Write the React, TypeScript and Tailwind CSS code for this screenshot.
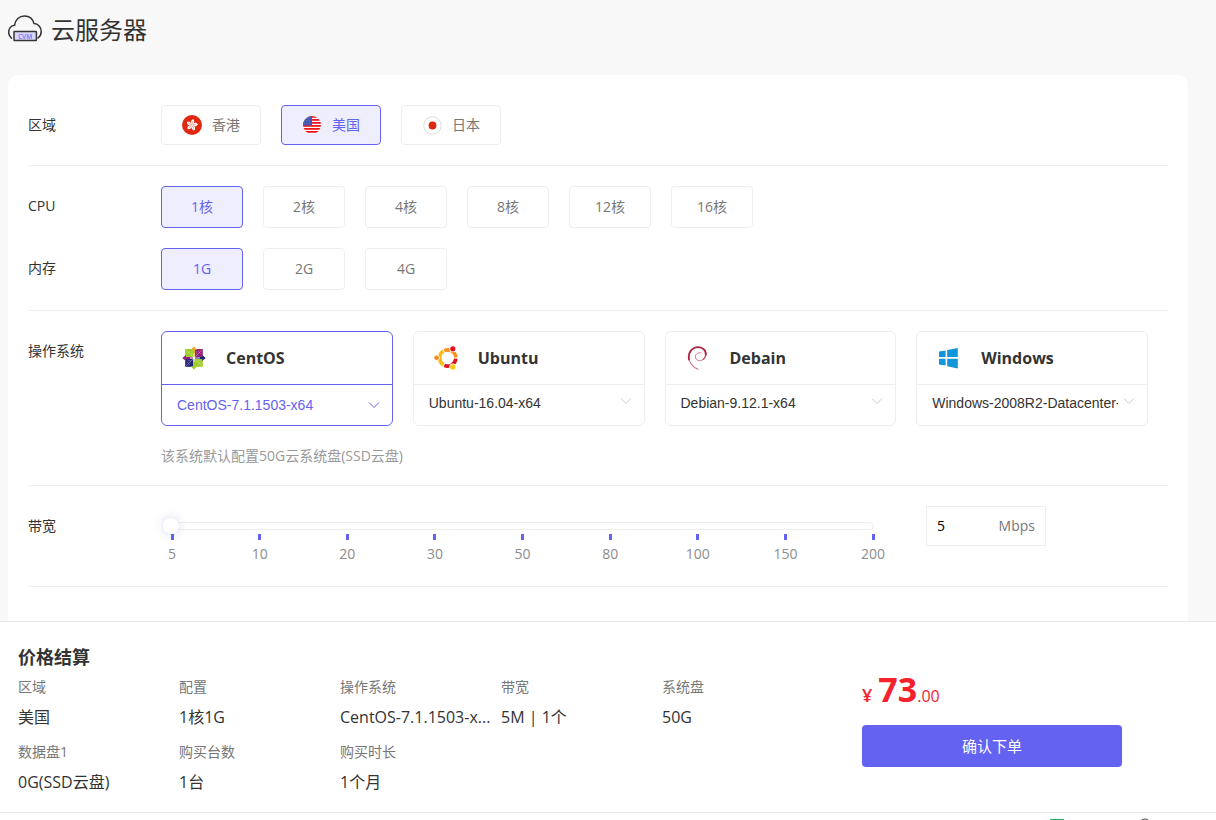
import { useState } from 'react'
import type { ReactNode } from 'react'

const REGIONS = [
  { id: 'hk', name: '香港', icon: <HongKongFlag /> },
  { id: 'us', name: '美国', icon: <UsaFlag /> },
  { id: 'jp', name: '日本', icon: <JapanFlag /> },
]

const CPUS = ['1核', '2核', '4核', '8核', '12核', '16核']
const MEMORY = ['1G', '2G', '4G']
const BANDWIDTH = [5, 10, 20, 30, 50, 80, 100, 150, 200]

const SYSTEMS = [
  { name: 'CentOS', icon: <CentosLogo />, versions: ['CentOS-7.1.1503-x64'] },
  { name: 'Ubuntu', icon: <UbuntuLogo />, versions: ['Ubuntu-16.04-x64'] },
  { name: 'Debain', icon: <DebianLogo />, versions: ['Debian-9.12.1-x64'] },
  { name: 'Windows', icon: <WindowsLogo />, versions: ['Windows-2008R2-Datacenter-x64-cn'] },
]

const shorten = (text: string) => (text.length > 18 ? `${text.slice(0, 17)}...` : text)

function CloudIcon() {
  return (
    <svg className="w-9 h-8" viewBox="0.8 1 36 32" fill="none" aria-hidden="true">
      <path
        d="M4.2 25.2C2.6 24 1.5 22 1.5 19.3C1.5 15.6 3.8 12.6 7.4 12.2C8 6.6 12.2 2.9 17.2 2.9C22 2.9 25.6 5.8 26.8 10.6C31 10.8 34 14.2 34 18.4C34 21.4 32.5 23.6 30.8 25"
        stroke="#333"
        strokeWidth="1.5"
        strokeLinecap="round"
      />
      <rect x="6.8" y="18.4" width="22.4" height="9.2" rx="0.6" fill="#d9d8ff" stroke="#333" strokeWidth="1.5" />
      <text x="18" y="25.5" textAnchor="middle" fontSize="6.5" fontWeight="700" fontFamily="Open Sans, sans-serif" fill="#8482f5">
        CVM
      </text>
    </svg>
  )
}

function HongKongFlag() {
  return (
    <svg className="w-5 h-5" viewBox="0 0 20 20" aria-hidden="true">
      <circle cx="10" cy="10" r="10" fill="#de2910" />
      {[15, 87, 159, 231, 303].map((angle) => (
        <g key={angle} transform={`rotate(${angle} 10 10)`}>
          <path d="M10 10C7.6 8.8 7.2 5.4 9.9 4C10.5 5 11.6 5.5 11.4 6.9C11.2 8.1 10 8.3 10 10Z" fill="#fff" />
          <path d="M9.8 8.8C9.3 7.9 9.4 6.8 10 6" fill="none" stroke="#de2910" strokeWidth="0.4" />
        </g>
      ))}
    </svg>
  )
}

function UsaFlag() {
  return (
    <svg className="w-5 h-5" viewBox="0 0 20 20" aria-hidden="true">
      <clipPath id="usa">
        <circle cx="10" cy="10" r="9" />
      </clipPath>
      <g clipPath="url(#usa)">
        <rect width="20" height="20" fill="#fff" />
        {[1, 4, 7, 10, 13, 16].map((y) => (
          <rect key={y} y={y} width="20" height="1.8" fill="#f0141e" />
        ))}
        <rect width="10" height="10.4" fill="#4558b0" />
        {[3, 5.5, 8].map((y) =>
          [2.5, 5, 7.5].map((x) => <circle key={`${x}-${y}`} cx={x} cy={y} r="0.4" fill="#8f9cd6" />)
        )}
      </g>
    </svg>
  )
}

function JapanFlag() {
  return (
    <svg className="w-5 h-5" viewBox="0 0 20 20" aria-hidden="true">
      <circle cx="10.5" cy="10.5" r="8.7" fill="#fff" stroke="#dcdcdc" />
      <circle cx="10.5" cy="10.5" r="3.9" fill="#de2910" />
    </svg>
  )
}

function CentosLogo() {
  return (
    <svg className="w-6 h-6" viewBox="0 0 24 24" aria-hidden="true">
      <rect x="3.2" y="3" width="8.4" height="8.4" fill="#9ccd2a" />
      <rect x="12.4" y="3" width="8.4" height="8.4" fill="#932279" />
      <rect x="3.2" y="12.4" width="8.4" height="8.4" fill="#262577" />
      <rect x="12.4" y="12.4" width="8.4" height="8.4" fill="#9ccd2a" />
      <path d="M4 4L20 20M20 4L4 20" stroke="#fff" strokeWidth="0.7" strokeOpacity="0.4" />
      <path
        d="M5 8L8 5M9 10L10 5M14 5L15 9M16 5L19 8M5 16L8 19M5 14L9 15M16 19L19 16M15 15L19 14"
        stroke="#fff"
        strokeWidth="0.5"
        strokeOpacity="0.4"
      />
      <path d="M12 0.3L15 4H13V11H11V4H9Z" fill="#efa724" />
      <path d="M23.7 12L20.2 15V13H13V11H20.2V9Z" fill="#262577" />
      <path d="M12 23.7L9 20.2H11V13H13V20.2H15Z" fill="#9ccd2a" />
      <path d="M0.3 12L3.8 9V11H11V13H3.8V15Z" fill="#932279" />
      <path d="M12 7V16M8 12H18" stroke="#fff" strokeWidth="0.9" />
    </svg>
  )
}

function UbuntuLogo() {
  return (
    <svg className="w-6 h-6" viewBox="0 0 24 24" fill="none" aria-hidden="true">
      <path d="M9.3 5.1A8.2 8.2 0 0 0 9.3 18.7" stroke="#fdb813" strokeWidth="3.6" />
      <path d="M10.3 4.6A8.2 8.2 0 0 1 21.8 11.4" stroke="#f78f1e" strokeWidth="3.6" />
      <path d="M21.8 12.6A8.2 8.2 0 0 1 10.3 19.4" stroke="#e3101d" strokeWidth="3.6" />
      <circle cx="2.6" cy="11.8" r="3" fill="#fff" />
      <circle cx="18.8" cy="2.8" r="3.5" fill="#fff" />
      <circle cx="18.8" cy="20.9" r="3.5" fill="#fff" />
      <circle cx="2.6" cy="11.8" r="2.4" fill="#f78f1e" />
      <circle cx="18.8" cy="2.8" r="2.6" fill="#e3101d" />
      <circle cx="18.8" cy="20.9" r="2.6" fill="#fdc70c" />
    </svg>
  )
}

function DebianLogo() {
  return (
    <svg className="w-6 h-6" viewBox="0 0 24 24" fill="none" stroke="#b0233f" strokeLinecap="round" aria-hidden="true">
      <path d="M12 23.2C6.4 21 2.4 16 2.7 10.4" strokeWidth="1.1" strokeOpacity="0.6" />
      <path d="M3 13.6C1.6 6.2 6.4 1.1 12.2 1.1C17 1.1 20 4.6 19.8 8.6" strokeWidth="1.8" />
      <path d="M19 4C20.8 7.4 19.6 11.6 17.4 13.2" strokeWidth="1.4" strokeOpacity="0.8" />
      <path d="M17.8 12.8C15.6 15.6 11 15.4 9.6 12C8.6 9 11 6.2 14.8 6.8" strokeWidth="1" strokeOpacity="0.6" />
    </svg>
  )
}

function WindowsLogo() {
  return (
    <svg className="w-6 h-6" viewBox="0 0 24 24" fill="#1296db" aria-hidden="true">
      <path d="M2 5.4L8.6 4.4V11H2ZM10.2 4.1L20.8 1.9V11H10.2ZM2 12.8H8.6V19.4L2 18.4ZM10.2 12.8H20.8V22.4L10.2 20.2Z" />
    </svg>
  )
}

interface RowProps {
  label: string
  children: ReactNode
}

function Row({ label, children }: RowProps) {
  return (
    <div className="flex" role="group" aria-label={label}>
      <div className="w-[133px] shrink-0 text-sm leading-10">{label}</div>
      <div className="flex-1 min-w-0">{children}</div>
    </div>
  )
}

function Section({ children }: { children: ReactNode }) {
  return <section className="flex flex-col gap-5 pb-5 mb-5 border-b border-[#efeefe]">{children}</section>
}

interface OptionProps {
  active: boolean
  onClick: () => void
  className: string
  children: ReactNode
}

function Option({ active, onClick, className, children }: OptionProps) {
  return (
    <button
      type="button"
      aria-pressed={active}
      onClick={onClick}
      className={`flex items-center justify-center gap-2.5 rounded-sm border text-sm cursor-pointer ${
        active ? 'border-[#6462f1] bg-[#efeefd] text-[#6462f1]' : 'border-[#eee] bg-white text-[#777]'
      } ${className}`}
    >
      {children}
    </button>
  )
}

interface SystemCardProps {
  system: (typeof SYSTEMS)[number]
  active: boolean
  onSelect: () => void
}

function SystemCard({ system, active, onSelect }: SystemCardProps) {
  const border = active ? 'border-[#6462f1]' : 'border-[#eee]'

  return (
    <div className={`rounded-md border ${border}`} onClick={onSelect}>
      <div className={`flex items-center gap-5 h-[53px] pl-5 border-b ${border}`}>
        {system.icon}
        <span className="text-base font-bold">{system.name}</span>
      </div>
      <div className={`relative h-10 pl-[15px] pr-[29px] ${active ? 'text-[#6462f1]' : ''}`}>
        <select
          aria-label={system.name}
          className={`block w-full appearance-none bg-transparent font-['Liberation_Sans',sans-serif] text-sm outline-none ${
            active ? 'h-10' : 'h-9'
          }`}
        >
          {system.versions.map((version) => (
            <option key={version}>{version}</option>
          ))}
        </select>
        <svg
          className={`absolute right-3 w-3 h-2 pointer-events-none ${active ? 'top-4' : 'top-3 text-[#ccc]'}`}
          viewBox="0 0 12 8"
          fill="none"
          stroke="currentColor"
          aria-hidden="true"
        >
          <path d="M1 1.5L6 6.5L11 1.5" />
        </svg>
      </div>
    </div>
  )
}

function SummaryItem({ label, value }: { label: string; value: string }) {
  return (
    <div className="h-[65px] min-w-0 pr-1">
      <dt className="text-sm leading-[30px] text-[#777]">{label}</dt>
      <dd className="text-base leading-[30px] whitespace-nowrap">{shorten(value)}</dd>
    </div>
  )
}

export default function App() {
  const [region, setRegion] = useState('us')
  const [cpu, setCpu] = useState('1核')
  const [memory, setMemory] = useState('1G')
  const [system, setSystem] = useState('CentOS')
  const [step, setStep] = useState(0)

  const bandwidth = BANDWIDTH[step]
  const summary = [
    { label: '区域', value: REGIONS.find((r) => r.id === region)!.name },
    { label: '配置', value: `${cpu}${memory}` },
    { label: '操作系统', value: SYSTEMS.find((s) => s.name === system)!.versions[0] },
    { label: '带宽', value: `${bandwidth}M | 1个` },
    { label: '系统盘', value: '50G' },
    { label: '数据盘1', value: '0G(SSD云盘)' },
    { label: '购买台数', value: '1台' },
    { label: '购买时长', value: '1个月' },
  ]

  return (
    <div className="h-screen flex flex-col overflow-hidden bg-[#f8f8f8] text-[#333] font-['Open_Sans','Noto_Sans_CJK_SC',sans-serif]">
      <main className="flex-1 min-h-0 overflow-hidden pl-2 pr-7">
        <header className="flex items-center gap-[7px] h-[75px] pb-4">
          <CloudIcon />
          <h1 className="text-2xl">云服务器</h1>
        </header>

        <div className="rounded-t-[10px] bg-white px-5 pt-[30px] pb-20">
          <Section>
            <Row label="区域">
              <div className="flex gap-5">
                {REGIONS.map((r) => (
                  <Option key={r.id} active={r.id === region} onClick={() => setRegion(r.id)} className="w-[100px] h-10">
                    {r.icon}
                    {r.name}
                  </Option>
                ))}
              </div>
            </Row>
          </Section>

          <Section>
            <Row label="CPU">
              <div className="flex gap-5">
                {CPUS.map((c) => (
                  <Option key={c} active={c === cpu} onClick={() => setCpu(c)} className="w-[82px] h-[42px]">
                    {c}
                  </Option>
                ))}
              </div>
            </Row>
            <Row label="内存">
              <div className="flex gap-5">
                {MEMORY.map((m) => (
                  <Option key={m} active={m === memory} onClick={() => setMemory(m)} className="w-[82px] h-[42px]">
                    {m}
                  </Option>
                ))}
              </div>
            </Row>
          </Section>

          <Section>
            <Row label="操作系统">
              <div className="grid grid-cols-4 gap-5 pr-5">
                {SYSTEMS.map((s) => (
                  <SystemCard key={s.name} system={s} active={s.name === system} onSelect={() => setSystem(s.name)} />
                ))}
              </div>
              <p className="mt-5 text-sm leading-[19px] text-[#999]">该系统默认配置50G云系统盘(SSD云盘)</p>
            </Row>
          </Section>

          <Section>
            <Row label="带宽">
              <div className="flex h-[60px]">
                <div className="relative flex-1 max-w-[703px] ml-2.5 mr-[52px] pt-4">
                  <div className="h-2 rounded-sm border border-[#eee]" />
                  <input
                    type="range"
                    aria-label="带宽"
                    min={0}
                    max={BANDWIDTH.length - 1}
                    value={step}
                    onChange={(e) => setStep(Number(e.target.value))}
                    className="absolute -left-2 -right-2 top-3 h-4 w-[calc(100%+16px)] appearance-none bg-transparent cursor-pointer [&::-webkit-slider-thumb]:appearance-none [&::-webkit-slider-thumb]:w-4 [&::-webkit-slider-thumb]:h-4 [&::-webkit-slider-thumb]:rounded-full [&::-webkit-slider-thumb]:bg-white [&::-webkit-slider-thumb]:shadow-[0_0_10px_rgba(100,98,241,0.25)]"
                  />
                  <div className="flex justify-between px-px mt-1">
                    {BANDWIDTH.map((b) => (
                      <div key={b} className="flex flex-col items-center w-0 text-sm text-[#8c8c8c]">
                        <span className="w-[3px] h-1.5 mb-1 bg-[#6462f1]" />
                        {b}
                      </div>
                    ))}
                  </div>
                </div>
                <label className="flex items-center justify-between w-[120px] h-10 px-2.5 border border-[#eee] text-sm text-[#777]">
                  <input
                    type="text"
                    value={bandwidth}
                    readOnly
                    aria-label="带宽 Mbps"
                    className="w-10 bg-transparent text-black outline-none"
                  />
                  Mbps
                </label>
              </div>
            </Row>
          </Section>
        </div>
      </main>

      <footer className="flex bg-white border-t border-[#e8e8e8] pt-5 pb-2.5 pl-[18px]">
        <div className="w-[844px]">
          <h2 className="text-lg font-bold leading-[30px]">价格结算</h2>
          <dl className="grid grid-cols-[repeat(5,161px)]">
            {summary.map((item) => (
              <SummaryItem key={item.label} label={item.label} value={item.value} />
            ))}
          </dl>
        </div>
        <div className="w-[260px] pt-[22px]">
          <p className="flex items-baseline h-[61px] text-[#f5222d]">
            <span className="mr-1.5 text-lg font-semibold">¥</span>
            <span className="text-[34px] font-bold">73</span>
            <span className="text-base">.00</span>
          </p>
          <button type="button" className="w-full h-[42px] rounded-sm bg-[#6462f1] text-[15px] text-white cursor-pointer">
            确认下单
          </button>
        </div>
      </footer>

      {/* only the top edge of the bar shows above the fold */}
      <div className="flex gap-[74px] justify-end h-2 shrink-0 overflow-hidden bg-white border-t border-[#e8e8e8] pr-[65px] pt-[5px]">
        <svg className="w-4 h-4" viewBox="0 0 16 16" fill="none" aria-hidden="true">
          <rect x="1" y="1" width="14" height="14" fill="#19b464" />
        </svg>
        <svg className="w-3 h-4" viewBox="0 0 12 16" fill="none" aria-hidden="true">
          <circle cx="6" cy="6.5" r="5.5" stroke="#444" />
        </svg>
      </div>
    </div>
  )
}
